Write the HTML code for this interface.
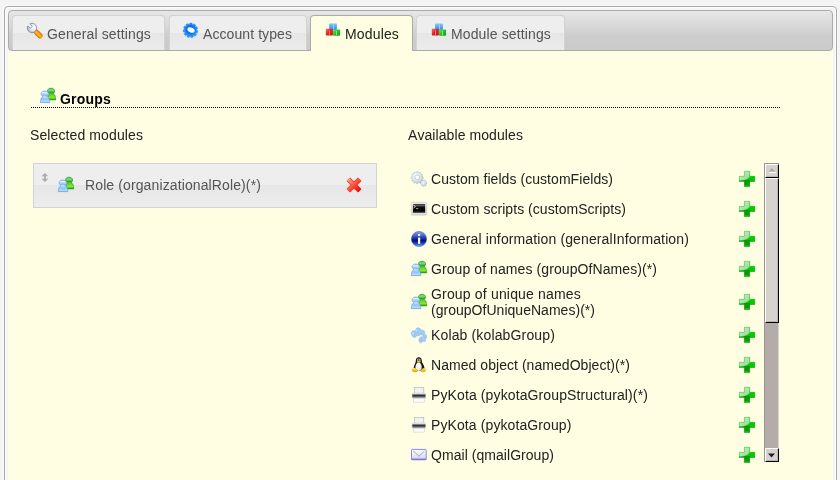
<!DOCTYPE html>
<html><head><meta charset="utf-8"><style>
html,body{margin:0;padding:0;}
body{width:840px;height:480px;overflow:hidden;background:#f4f4f4;font-family:"Liberation Sans",sans-serif;font-size:14px;position:relative;}
.a{position:absolute;}
.t{position:absolute;line-height:16px;white-space:nowrap;color:#222;will-change:transform;font-kerning:none;font-variant-ligatures:none;}
#outer{left:4px;top:6px;width:833px;height:600px;box-sizing:border-box;border:1px solid #aaa;border-radius:4px;background:#f5f5f8;box-shadow:0 0 0 1px #f8f8f8,inset 0 0 0 1px #fbfbfb;}
#panel{left:8px;top:51px;width:825px;height:560px;background:#fffde2;}
#nav{left:8px;top:10px;width:825px;height:41px;box-sizing:border-box;border:1px solid #aaa;border-radius:4px;background:linear-gradient(#e7e7e7 0%,#cdcdcd 65%,#cbcbcb 100%);}
.tab{position:absolute;top:15px;height:35px;box-sizing:border-box;border:1px solid #d3d3d3;border-bottom:0;border-radius:4px 4px 0 0;background:linear-gradient(#eeeeee 0,#eeeeee 50%,#e6e6e6 50%,#ececec 100%);}
.tab.act{border-color:#aaa;background:#fffde2;height:36px;}
#dots{left:31px;top:107px;width:749px;height:1px;background:repeating-linear-gradient(90deg,#000 0,#000 1px,transparent 1px,transparent 2px);}
#selbox{left:33px;top:163px;width:344px;height:45px;box-sizing:border-box;border:1px solid #d3d3d3;background:linear-gradient(#eeeeee 0,#eeeeee 50%,#e6e6e6 50%,#ededed 100%);}
#sb{left:764px;top:163px;width:15px;height:299px;box-sizing:border-box;background:#b4aca8;border-left:1px solid #9a9490;border-top:1px solid #9a9490;box-shadow:inset -1px 0 0 #d8d4d0;}
.sbb{position:absolute;box-sizing:border-box;left:0;width:14px;background:#d6d2ce;border-top:1px solid #fff;border-left:1px solid #fff;border-right:1px solid #000;border-bottom:1px solid #000;box-shadow:inset -1px -1px 0 #bcb6b2;}
</style></head><body>
<div id="outer" class="a"></div><div id="panel" class="a"></div><div id="nav" class="a"></div>
<div class="tab" style="left:12px;width:153px"></div>
<div class="tab" style="left:169px;width:138px"></div>
<div class="tab act" style="left:310px;width:103px"></div>
<div class="tab" style="left:416px;width:149px"></div>
<svg class="a" style="left:27px;top:22px;overflow:visible" width="16" height="16" viewBox="0 0 16 16"><defs><linearGradient id="wo" x1="0" y1="0" x2="1" y2="0"><stop offset="0" stop-color="#e07800"/><stop offset="0.45" stop-color="#ffc020"/><stop offset="1" stop-color="#f07000"/></linearGradient>
<radialGradient id="ws" cx="0.65" cy="0.4" r="0.75"><stop offset="0" stop-color="#ffffff"/><stop offset="0.5" stop-color="#e4e6ee"/><stop offset="1" stop-color="#9ca2b8"/></radialGradient></defs>
<g transform="rotate(-45 11.2 12)"><rect x="8.8" y="7" width="4.8" height="9.8" rx="2.4" fill="url(#wo)" stroke="#c86000" stroke-width="0.6"/></g>
<path d="M0.79,3.91 L3.23,6.35 L5.35,4.23 L2.91,1.79 A4.7,4.7 0 1 1 0.79,3.91 Z" fill="url(#ws)" stroke="#7c84a0" stroke-width="0.8" stroke-linejoin="round"/></svg>
<span class="t" style="left:47px;top:26px;letter-spacing:0.128px;color:#555">General settings</span>
<svg class="a" style="left:184px;top:22px;overflow:visible" width="16" height="16" viewBox="0 0 16 16"><defs><radialGradient id="gr" cx="0.5" cy="0.45" r="0.6"><stop offset="0.45" stop-color="#1070e8"/><stop offset="0.75" stop-color="#2a9aff"/><stop offset="1" stop-color="#1a8af8"/></radialGradient>
<radialGradient id="gh" cx="0.4" cy="0.45" r="0.6"><stop offset="0" stop-color="#ffffff"/><stop offset="0.7" stop-color="#f4faff"/><stop offset="1" stop-color="#9ad4ff"/></radialGradient></defs>
<g transform="translate(6.5 8.3)"><path d="M5.99,-0.34 L7.39,0.40 L6.96,2.51 L5.38,2.65 L5.22,2.95 L6.00,4.33 L4.50,5.87 L3.10,5.14 L2.80,5.31 L2.70,6.89 L0.61,7.37 L-0.17,6.00 L-0.51,5.98 L-1.45,7.26 L-3.47,6.53 L-3.39,4.95 L-3.66,4.75 L-5.14,5.32 L-6.45,3.62 L-5.53,2.34 L-5.65,2.02 L-7.20,1.70 L-7.39,-0.44 L-5.91,-1.02 L-5.84,-1.36 L-6.98,-2.47 L-5.97,-4.37 L-4.42,-4.06 L-4.18,-4.30 L-4.54,-5.85 L-2.66,-6.90 L-1.52,-5.80 L-1.19,-5.88 L-0.65,-7.37 L1.49,-7.25 L1.85,-5.71 L2.18,-5.59 L3.44,-6.55 L5.17,-5.29 L4.65,-3.80 L4.85,-3.53 L6.43,-3.66 L7.21,-1.65 L5.96,-0.68 Z" fill="url(#gr)" stroke="#1a88f8" stroke-width="0.4" stroke-linejoin="round"/>
<ellipse cx="0.5" cy="-0.4" rx="3.9" ry="2.5" transform="rotate(24)" fill="url(#gh)"/></g></svg>
<span class="t" style="left:203px;top:26px;letter-spacing:0.082px;color:#555">Account types</span>
<svg class="a" style="left:325px;top:22px;overflow:visible" width="16" height="16" viewBox="0 0 16 16"><defs><linearGradient id="cb" x1="0" y1="0" x2="0" y2="1"><stop offset="0" stop-color="#a8d8ff"/><stop offset="0.25" stop-color="#6ab8f8"/><stop offset="1" stop-color="#2a90f0"/></linearGradient>
<linearGradient id="cr" x1="0" y1="0" x2="1" y2="1"><stop offset="0" stop-color="#f07070"/><stop offset="0.5" stop-color="#e02020"/><stop offset="1" stop-color="#d00808"/></linearGradient>
<linearGradient id="cg" x1="0" y1="0" x2="1" y2="1"><stop offset="0" stop-color="#70dd70"/><stop offset="0.5" stop-color="#28c028"/><stop offset="1" stop-color="#10a010"/></linearGradient></defs>
<rect x="4.1" y="1.3" width="7.8" height="6.6" rx="0.8" fill="url(#cb)"/><rect x="8.2" y="2.8" width="0.7" height="4.5" fill="#e8f6ff" opacity="0.8"/>
<rect x="0.8" y="6.8" width="7.1" height="6.7" rx="0.8" fill="url(#cr)"/><rect x="4.2" y="8.6" width="0.7" height="4.3" fill="#ffd8d8" opacity="0.8"/>
<rect x="7.9" y="7.5" width="7.2" height="6.2" rx="0.8" fill="url(#cg)"/><rect x="11.2" y="9" width="0.7" height="4.2" fill="#d8ffd8" opacity="0.8"/></svg>
<span class="t" style="left:345px;top:26px;letter-spacing:0.155px;color:#212121">Modules</span>
<svg class="a" style="left:431px;top:22px;overflow:visible" width="16" height="16" viewBox="0 0 16 16"><defs><linearGradient id="cb" x1="0" y1="0" x2="0" y2="1"><stop offset="0" stop-color="#a8d8ff"/><stop offset="0.25" stop-color="#6ab8f8"/><stop offset="1" stop-color="#2a90f0"/></linearGradient>
<linearGradient id="cr" x1="0" y1="0" x2="1" y2="1"><stop offset="0" stop-color="#f07070"/><stop offset="0.5" stop-color="#e02020"/><stop offset="1" stop-color="#d00808"/></linearGradient>
<linearGradient id="cg" x1="0" y1="0" x2="1" y2="1"><stop offset="0" stop-color="#70dd70"/><stop offset="0.5" stop-color="#28c028"/><stop offset="1" stop-color="#10a010"/></linearGradient></defs>
<rect x="4.1" y="1.3" width="7.8" height="6.6" rx="0.8" fill="url(#cb)"/><rect x="8.2" y="2.8" width="0.7" height="4.5" fill="#e8f6ff" opacity="0.8"/>
<rect x="0.8" y="6.8" width="7.1" height="6.7" rx="0.8" fill="url(#cr)"/><rect x="4.2" y="8.6" width="0.7" height="4.3" fill="#ffd8d8" opacity="0.8"/>
<rect x="7.9" y="7.5" width="7.2" height="6.2" rx="0.8" fill="url(#cg)"/><rect x="11.2" y="9" width="0.7" height="4.2" fill="#d8ffd8" opacity="0.8"/></svg>
<span class="t" style="left:451px;top:26px;letter-spacing:0.130px;color:#555">Module settings</span>
<svg class="a" style="left:40px;top:88px;overflow:visible" width="16" height="16" viewBox="0 0 16 16"><defs><linearGradient id="gb" x1="0" y1="0" x2="0" y2="1"><stop offset="0" stop-color="#94c4f4"/><stop offset="0.12" stop-color="#dcefff"/><stop offset="0.38" stop-color="#88bef2"/><stop offset="0.5" stop-color="#c4e2ff"/><stop offset="0.68" stop-color="#8cc2f4"/><stop offset="0.9" stop-color="#b4daff"/><stop offset="1" stop-color="#70a8e8"/></linearGradient>
<linearGradient id="gg" x1="0" y1="0" x2="0" y2="1"><stop offset="0" stop-color="#2aa82a"/><stop offset="0.15" stop-color="#98dc88"/><stop offset="0.38" stop-color="#22a822"/><stop offset="0.5" stop-color="#60c840"/><stop offset="0.8" stop-color="#88ea20"/><stop offset="1" stop-color="#2a9a1a"/></linearGradient></defs>
<path d="M11,0.2 C13.2,0.2 14.6,1.4 14.6,3 C14.6,4.4 13.7,5.2 13.2,5.8 C15,6.5 15.6,8.4 15.7,11.9 L7.6,11.9 C7.7,8.4 8.4,6.5 9.8,5.8 C9,5.2 7.4,4.4 7.4,3 C7.4,1.4 8.8,0.2 11,0.2 Z" fill="url(#gg)" stroke="#1c941c" stroke-width="0.6"/>
<path d="M4.8,3 C7,3 8.5,4.2 8.5,5.8 C8.5,7.2 7.5,8 6.9,8.6 C8.8,9.3 9.8,11 9.9,14.6 L0.3,14.6 C0.4,11 1.4,9.3 3,8.6 C2.1,8 1.1,7.2 1.1,5.8 C1.1,4.2 2.6,3 4.8,3 Z" fill="url(#gb)" stroke="#5c9ae0" stroke-width="0.6"/></svg>
<span class="t" style="left:60px;top:91px;letter-spacing:0.203px;font-weight:bold;color:#000">Groups</span>
<div id="dots" class="a"></div>
<span class="t" style="left:30px;top:127px;letter-spacing:0.107px;">Selected modules</span>
<span class="t" style="left:408px;top:127px;letter-spacing:0.081px;">Available modules</span>
<div id="selbox" class="a"></div>
<svg class="a" style="left:41px;top:173px;overflow:visible" width="8" height="9" viewBox="0 0 8 9"><path d="M3.9,0 L7.3,3.3 L4.85,3.3 L4.85,5.7 L7.3,5.7 L3.9,9 L0.5,5.7 L2.95,5.7 L2.95,3.3 L0.5,3.3 Z" fill="#ababab"/></svg>
<svg class="a" style="left:58px;top:177px;overflow:visible" width="16" height="16" viewBox="0 0 16 16"><defs><linearGradient id="gb" x1="0" y1="0" x2="0" y2="1"><stop offset="0" stop-color="#94c4f4"/><stop offset="0.12" stop-color="#dcefff"/><stop offset="0.38" stop-color="#88bef2"/><stop offset="0.5" stop-color="#c4e2ff"/><stop offset="0.68" stop-color="#8cc2f4"/><stop offset="0.9" stop-color="#b4daff"/><stop offset="1" stop-color="#70a8e8"/></linearGradient>
<linearGradient id="gg" x1="0" y1="0" x2="0" y2="1"><stop offset="0" stop-color="#2aa82a"/><stop offset="0.15" stop-color="#98dc88"/><stop offset="0.38" stop-color="#22a822"/><stop offset="0.5" stop-color="#60c840"/><stop offset="0.8" stop-color="#88ea20"/><stop offset="1" stop-color="#2a9a1a"/></linearGradient></defs>
<path d="M11,0.2 C13.2,0.2 14.6,1.4 14.6,3 C14.6,4.4 13.7,5.2 13.2,5.8 C15,6.5 15.6,8.4 15.7,11.9 L7.6,11.9 C7.7,8.4 8.4,6.5 9.8,5.8 C9,5.2 7.4,4.4 7.4,3 C7.4,1.4 8.8,0.2 11,0.2 Z" fill="url(#gg)" stroke="#1c941c" stroke-width="0.6"/>
<path d="M4.8,3 C7,3 8.5,4.2 8.5,5.8 C8.5,7.2 7.5,8 6.9,8.6 C8.8,9.3 9.8,11 9.9,14.6 L0.3,14.6 C0.4,11 1.4,9.3 3,8.6 C2.1,8 1.1,7.2 1.1,5.8 C1.1,4.2 2.6,3 4.8,3 Z" fill="url(#gb)" stroke="#5c9ae0" stroke-width="0.6"/></svg>
<span class="t" style="left:85px;top:177px;letter-spacing:0.116px;color:#555">Role (organizationalRole)(*)</span>
<svg class="a" style="left:346px;top:177px;overflow:visible" width="16" height="16" viewBox="0 0 16 16"><defs><linearGradient id="xr" gradientUnits="userSpaceOnUse" x1="2" y1="2" x2="14" y2="14"><stop offset="0" stop-color="#ff9a88"/><stop offset="0.45" stop-color="#ff5a40"/><stop offset="1" stop-color="#f00000"/></linearGradient></defs>
<g stroke-linecap="butt"><line x1="2.3" y1="2.3" x2="13.7" y2="13.7" stroke="#e03020" stroke-width="5"/><line x1="13.7" y1="2.3" x2="2.3" y2="13.7" stroke="#e03020" stroke-width="5"/>
<line x1="2.3" y1="2.3" x2="13.7" y2="13.7" stroke="url(#xr)" stroke-width="3.8"/><line x1="13.7" y1="2.3" x2="2.3" y2="13.7" stroke="url(#xr)" stroke-width="3.8"/></g></svg>
<svg class="a" style="left:411px;top:171px;overflow:visible" width="16" height="16" viewBox="0 0 16 16"><defs><radialGradient id="cfg" cx="0.4" cy="0.35" r="0.7"><stop offset="0" stop-color="#ffffff"/><stop offset="0.6" stop-color="#dde6ee"/><stop offset="1" stop-color="#a8bacc"/></radialGradient></defs>
<path d="M15.10,11.39 L15.86,11.58 L15.86,12.62 L15.10,12.81 L14.87,13.37 L15.27,14.04 L14.54,14.77 L13.87,14.37 L13.31,14.60 L13.12,15.36 L12.08,15.36 L11.89,14.60 L11.33,14.37 L10.66,14.77 L9.93,14.04 L10.33,13.37 L10.10,12.81 L9.34,12.62 L9.34,11.58 L10.10,11.39 L10.33,10.83 L9.93,10.16 L10.66,9.43 L11.33,9.83 L11.89,9.60 L12.08,8.84 L13.12,8.84 L13.31,9.60 L13.87,9.83 L14.54,9.43 L15.27,10.16 L14.87,10.83 Z" fill="url(#cfg)" stroke="#9fb4c8" stroke-width="0.5"/><circle cx="12.6" cy="12.1" r="1.2" fill="#fffde2" stroke="#b0c0d0" stroke-width="0.4"/>
<path d="M11.02,5.71 L12.17,5.97 L12.17,7.23 L11.02,7.49 L10.82,8.24 L11.68,9.04 L11.05,10.13 L9.93,9.78 L9.38,10.33 L9.73,11.45 L8.64,12.08 L7.84,11.22 L7.09,11.42 L6.83,12.57 L5.57,12.57 L5.31,11.42 L4.56,11.22 L3.76,12.08 L2.67,11.45 L3.02,10.33 L2.47,9.78 L1.35,10.13 L0.72,9.04 L1.58,8.24 L1.38,7.49 L0.23,7.23 L0.23,5.97 L1.38,5.71 L1.58,4.96 L0.72,4.16 L1.35,3.07 L2.47,3.42 L3.02,2.87 L2.67,1.75 L3.76,1.12 L4.56,1.98 L5.31,1.78 L5.57,0.63 L6.83,0.63 L7.09,1.78 L7.84,1.98 L8.64,1.12 L9.73,1.75 L9.38,2.87 L9.93,3.42 L11.05,3.07 L11.68,4.16 L10.82,4.96 Z" fill="url(#cfg)" stroke="#9fb4c8" stroke-width="0.5"/><circle cx="6.3" cy="6.3" r="2.4" fill="#fdfdf4" stroke="#a8bccc" stroke-width="0.7"/></svg>
<span class="t" style="left:431px;top:171px;letter-spacing:0.054px;">Custom fields (customFields)</span>
<svg class="a" style="left:739px;top:171px;overflow:visible" width="16" height="16" viewBox="0 0 16 16"><defs><clipPath id="pc"><path d="M5.3,0.2 H10.8 V5.2 H15.8 V10.5 H10.8 V15.7 H5.3 V10.5 H0.2 V5.2 H5.3 Z"/></clipPath>
<linearGradient id="pl" x1="0" y1="0" x2="1" y2="1"><stop offset="0" stop-color="#d8f4d4"/><stop offset="1" stop-color="#88d488"/></linearGradient>
<linearGradient id="pd" x1="0" y1="0" x2="0" y2="1"><stop offset="0" stop-color="#089a08"/><stop offset="0.7" stop-color="#109810"/><stop offset="1" stop-color="#50c050"/></linearGradient></defs>
<g clip-path="url(#pc)"><rect x="0" y="0" width="16" height="16" fill="#00c800"/>
<path d="M0,9 H16 V16 H0 Z" fill="url(#pd)"/><path d="M10.8,5.2 H16 V10.5 H10.8 C12,8.5 11.5,7 10.8,6.5 Z" fill="#00cc00"/>
<path d="M0,0 H10.8 V5.4 C9.5,7.6 6.5,9.3 0,9.6 Z" fill="url(#pl)"/></g>
<path d="M5.3,0.2 H10.8 V5.2 H15.8 V10.5 H10.8 V15.7 H5.3 V10.5 H0.2 V5.2 H5.3 Z" fill="none" stroke="#30b030" stroke-width="0.5" opacity="0.6"/></svg>
<svg class="a" style="left:411px;top:201px;overflow:visible" width="16" height="16" viewBox="0 0 16 16"><defs><linearGradient id="tf" x1="0" y1="0" x2="0" y2="1"><stop offset="0" stop-color="#ffffff"/><stop offset="1" stop-color="#dcdcdc"/></linearGradient>
<linearGradient id="ts" x1="0" y1="0" x2="0" y2="1"><stop offset="0" stop-color="#202020"/><stop offset="0.15" stop-color="#6a6a6a"/><stop offset="0.35" stop-color="#101010"/><stop offset="0.75" stop-color="#000"/><stop offset="1" stop-color="#4a4a4a"/></linearGradient></defs>
<rect x="0.3" y="1.3" width="15.4" height="12.8" rx="1.5" fill="url(#tf)" stroke="#b8b8b8" stroke-width="0.6"/>
<rect x="1.9" y="2.9" width="12.3" height="9" fill="url(#ts)"/>
<path d="M2.6,4 L4.4,5.5 L2.6,7" fill="none" stroke="#e0e0e0" stroke-width="0.9"/><rect x="5" y="7.2" width="2.2" height="0.9" fill="#ababab"/></svg>
<span class="t" style="left:431px;top:201px;letter-spacing:0.043px;">Custom scripts (customScripts)</span>
<svg class="a" style="left:739px;top:201px;overflow:visible" width="16" height="16" viewBox="0 0 16 16"><defs><clipPath id="pc"><path d="M5.3,0.2 H10.8 V5.2 H15.8 V10.5 H10.8 V15.7 H5.3 V10.5 H0.2 V5.2 H5.3 Z"/></clipPath>
<linearGradient id="pl" x1="0" y1="0" x2="1" y2="1"><stop offset="0" stop-color="#d8f4d4"/><stop offset="1" stop-color="#88d488"/></linearGradient>
<linearGradient id="pd" x1="0" y1="0" x2="0" y2="1"><stop offset="0" stop-color="#089a08"/><stop offset="0.7" stop-color="#109810"/><stop offset="1" stop-color="#50c050"/></linearGradient></defs>
<g clip-path="url(#pc)"><rect x="0" y="0" width="16" height="16" fill="#00c800"/>
<path d="M0,9 H16 V16 H0 Z" fill="url(#pd)"/><path d="M10.8,5.2 H16 V10.5 H10.8 C12,8.5 11.5,7 10.8,6.5 Z" fill="#00cc00"/>
<path d="M0,0 H10.8 V5.4 C9.5,7.6 6.5,9.3 0,9.6 Z" fill="url(#pl)"/></g>
<path d="M5.3,0.2 H10.8 V5.2 H15.8 V10.5 H10.8 V15.7 H5.3 V10.5 H0.2 V5.2 H5.3 Z" fill="none" stroke="#30b030" stroke-width="0.5" opacity="0.6"/></svg>
<svg class="a" style="left:411px;top:231px;overflow:visible" width="16" height="16" viewBox="0 0 16 16"><defs><linearGradient id="ig" x1="0" y1="0" x2="0" y2="1"><stop offset="0" stop-color="#8aa8ea"/><stop offset="0.25" stop-color="#4a6ad8"/><stop offset="0.5" stop-color="#102a9a"/><stop offset="0.62" stop-color="#001070"/><stop offset="0.85" stop-color="#3060d8"/><stop offset="1" stop-color="#80c8ff"/></linearGradient></defs>
<circle cx="8" cy="8" r="7.6" fill="url(#ig)" stroke="#3050b8" stroke-width="0.5"/>
<rect x="7" y="3.1" width="2.2" height="1.9" rx="0.6" fill="#fff"/><rect x="7" y="6.6" width="2.2" height="6.3" fill="#fff"/></svg>
<span class="t" style="left:431px;top:231px;letter-spacing:0.127px;">General information (generalInformation)</span>
<svg class="a" style="left:739px;top:231px;overflow:visible" width="16" height="16" viewBox="0 0 16 16"><defs><clipPath id="pc"><path d="M5.3,0.2 H10.8 V5.2 H15.8 V10.5 H10.8 V15.7 H5.3 V10.5 H0.2 V5.2 H5.3 Z"/></clipPath>
<linearGradient id="pl" x1="0" y1="0" x2="1" y2="1"><stop offset="0" stop-color="#d8f4d4"/><stop offset="1" stop-color="#88d488"/></linearGradient>
<linearGradient id="pd" x1="0" y1="0" x2="0" y2="1"><stop offset="0" stop-color="#089a08"/><stop offset="0.7" stop-color="#109810"/><stop offset="1" stop-color="#50c050"/></linearGradient></defs>
<g clip-path="url(#pc)"><rect x="0" y="0" width="16" height="16" fill="#00c800"/>
<path d="M0,9 H16 V16 H0 Z" fill="url(#pd)"/><path d="M10.8,5.2 H16 V10.5 H10.8 C12,8.5 11.5,7 10.8,6.5 Z" fill="#00cc00"/>
<path d="M0,0 H10.8 V5.4 C9.5,7.6 6.5,9.3 0,9.6 Z" fill="url(#pl)"/></g>
<path d="M5.3,0.2 H10.8 V5.2 H15.8 V10.5 H10.8 V15.7 H5.3 V10.5 H0.2 V5.2 H5.3 Z" fill="none" stroke="#30b030" stroke-width="0.5" opacity="0.6"/></svg>
<svg class="a" style="left:411px;top:261px;overflow:visible" width="16" height="16" viewBox="0 0 16 16"><defs><linearGradient id="gb" x1="0" y1="0" x2="0" y2="1"><stop offset="0" stop-color="#94c4f4"/><stop offset="0.12" stop-color="#dcefff"/><stop offset="0.38" stop-color="#88bef2"/><stop offset="0.5" stop-color="#c4e2ff"/><stop offset="0.68" stop-color="#8cc2f4"/><stop offset="0.9" stop-color="#b4daff"/><stop offset="1" stop-color="#70a8e8"/></linearGradient>
<linearGradient id="gg" x1="0" y1="0" x2="0" y2="1"><stop offset="0" stop-color="#2aa82a"/><stop offset="0.15" stop-color="#98dc88"/><stop offset="0.38" stop-color="#22a822"/><stop offset="0.5" stop-color="#60c840"/><stop offset="0.8" stop-color="#88ea20"/><stop offset="1" stop-color="#2a9a1a"/></linearGradient></defs>
<path d="M11,0.2 C13.2,0.2 14.6,1.4 14.6,3 C14.6,4.4 13.7,5.2 13.2,5.8 C15,6.5 15.6,8.4 15.7,11.9 L7.6,11.9 C7.7,8.4 8.4,6.5 9.8,5.8 C9,5.2 7.4,4.4 7.4,3 C7.4,1.4 8.8,0.2 11,0.2 Z" fill="url(#gg)" stroke="#1c941c" stroke-width="0.6"/>
<path d="M4.8,3 C7,3 8.5,4.2 8.5,5.8 C8.5,7.2 7.5,8 6.9,8.6 C8.8,9.3 9.8,11 9.9,14.6 L0.3,14.6 C0.4,11 1.4,9.3 3,8.6 C2.1,8 1.1,7.2 1.1,5.8 C1.1,4.2 2.6,3 4.8,3 Z" fill="url(#gb)" stroke="#5c9ae0" stroke-width="0.6"/></svg>
<span class="t" style="left:431px;top:261px;letter-spacing:0.084px;">Group of names (groupOfNames)(*)</span>
<svg class="a" style="left:739px;top:261px;overflow:visible" width="16" height="16" viewBox="0 0 16 16"><defs><clipPath id="pc"><path d="M5.3,0.2 H10.8 V5.2 H15.8 V10.5 H10.8 V15.7 H5.3 V10.5 H0.2 V5.2 H5.3 Z"/></clipPath>
<linearGradient id="pl" x1="0" y1="0" x2="1" y2="1"><stop offset="0" stop-color="#d8f4d4"/><stop offset="1" stop-color="#88d488"/></linearGradient>
<linearGradient id="pd" x1="0" y1="0" x2="0" y2="1"><stop offset="0" stop-color="#089a08"/><stop offset="0.7" stop-color="#109810"/><stop offset="1" stop-color="#50c050"/></linearGradient></defs>
<g clip-path="url(#pc)"><rect x="0" y="0" width="16" height="16" fill="#00c800"/>
<path d="M0,9 H16 V16 H0 Z" fill="url(#pd)"/><path d="M10.8,5.2 H16 V10.5 H10.8 C12,8.5 11.5,7 10.8,6.5 Z" fill="#00cc00"/>
<path d="M0,0 H10.8 V5.4 C9.5,7.6 6.5,9.3 0,9.6 Z" fill="url(#pl)"/></g>
<path d="M5.3,0.2 H10.8 V5.2 H15.8 V10.5 H10.8 V15.7 H5.3 V10.5 H0.2 V5.2 H5.3 Z" fill="none" stroke="#30b030" stroke-width="0.5" opacity="0.6"/></svg>
<svg class="a" style="left:411px;top:294px;overflow:visible" width="16" height="16" viewBox="0 0 16 16"><defs><linearGradient id="gb" x1="0" y1="0" x2="0" y2="1"><stop offset="0" stop-color="#94c4f4"/><stop offset="0.12" stop-color="#dcefff"/><stop offset="0.38" stop-color="#88bef2"/><stop offset="0.5" stop-color="#c4e2ff"/><stop offset="0.68" stop-color="#8cc2f4"/><stop offset="0.9" stop-color="#b4daff"/><stop offset="1" stop-color="#70a8e8"/></linearGradient>
<linearGradient id="gg" x1="0" y1="0" x2="0" y2="1"><stop offset="0" stop-color="#2aa82a"/><stop offset="0.15" stop-color="#98dc88"/><stop offset="0.38" stop-color="#22a822"/><stop offset="0.5" stop-color="#60c840"/><stop offset="0.8" stop-color="#88ea20"/><stop offset="1" stop-color="#2a9a1a"/></linearGradient></defs>
<path d="M11,0.2 C13.2,0.2 14.6,1.4 14.6,3 C14.6,4.4 13.7,5.2 13.2,5.8 C15,6.5 15.6,8.4 15.7,11.9 L7.6,11.9 C7.7,8.4 8.4,6.5 9.8,5.8 C9,5.2 7.4,4.4 7.4,3 C7.4,1.4 8.8,0.2 11,0.2 Z" fill="url(#gg)" stroke="#1c941c" stroke-width="0.6"/>
<path d="M4.8,3 C7,3 8.5,4.2 8.5,5.8 C8.5,7.2 7.5,8 6.9,8.6 C8.8,9.3 9.8,11 9.9,14.6 L0.3,14.6 C0.4,11 1.4,9.3 3,8.6 C2.1,8 1.1,7.2 1.1,5.8 C1.1,4.2 2.6,3 4.8,3 Z" fill="url(#gb)" stroke="#5c9ae0" stroke-width="0.6"/></svg>
<span class="t" style="left:431px;top:286px;letter-spacing:0.175px;">Group of unique names</span>
<span class="t" style="left:431px;top:302px;letter-spacing:0.026px;">(groupOfUniqueNames)(*)</span>
<svg class="a" style="left:739px;top:294px;overflow:visible" width="16" height="16" viewBox="0 0 16 16"><defs><clipPath id="pc"><path d="M5.3,0.2 H10.8 V5.2 H15.8 V10.5 H10.8 V15.7 H5.3 V10.5 H0.2 V5.2 H5.3 Z"/></clipPath>
<linearGradient id="pl" x1="0" y1="0" x2="1" y2="1"><stop offset="0" stop-color="#d8f4d4"/><stop offset="1" stop-color="#88d488"/></linearGradient>
<linearGradient id="pd" x1="0" y1="0" x2="0" y2="1"><stop offset="0" stop-color="#089a08"/><stop offset="0.7" stop-color="#109810"/><stop offset="1" stop-color="#50c050"/></linearGradient></defs>
<g clip-path="url(#pc)"><rect x="0" y="0" width="16" height="16" fill="#00c800"/>
<path d="M0,9 H16 V16 H0 Z" fill="url(#pd)"/><path d="M10.8,5.2 H16 V10.5 H10.8 C12,8.5 11.5,7 10.8,6.5 Z" fill="#00cc00"/>
<path d="M0,0 H10.8 V5.4 C9.5,7.6 6.5,9.3 0,9.6 Z" fill="url(#pl)"/></g>
<path d="M5.3,0.2 H10.8 V5.2 H15.8 V10.5 H10.8 V15.7 H5.3 V10.5 H0.2 V5.2 H5.3 Z" fill="none" stroke="#30b030" stroke-width="0.5" opacity="0.6"/></svg>
<svg class="a" style="left:411px;top:327px;overflow:visible" width="16" height="16" viewBox="0 0 16 16"><g fill="#a2cdf4" stroke="#86bcee" stroke-width="0.45">
<ellipse cx="3.1" cy="7" rx="2.7" ry="3.5" transform="rotate(-20 3.1 7)"/><ellipse cx="11.5" cy="5.6" rx="2.3" ry="2.6"/><ellipse cx="7.1" cy="4.8" rx="3.1" ry="4" transform="rotate(8 7.1 4.8)"/>
<ellipse cx="13.7" cy="9.6" rx="2" ry="2.3"/><ellipse cx="13" cy="12.6" rx="1.8" ry="2.2"/><ellipse cx="9.9" cy="12.8" rx="1.9" ry="3" transform="rotate(10 9.9 12.8)"/></g>
<g fill="none" stroke="#7ab4ec" stroke-width="0.5" opacity="0.7"><path d="M7,1.5 C6.5,4 6.8,6.5 7.6,8.5"/><path d="M3,4.5 C2.6,6.5 3,8.5 4,10"/><path d="M10,10.8 C9.8,12.5 10,14 10.4,15.2"/></g>
<g fill="#cde6fb" opacity="0.8"><ellipse cx="5.4" cy="3.2" rx="1.2" ry="1"/><ellipse cx="2.2" cy="6.2" rx="0.9" ry="1.2"/><ellipse cx="12.6" cy="11.5" rx="0.8" ry="0.8"/></g></svg>
<span class="t" style="left:431px;top:327px;letter-spacing:0.144px;">Kolab (kolabGroup)</span>
<svg class="a" style="left:739px;top:327px;overflow:visible" width="16" height="16" viewBox="0 0 16 16"><defs><clipPath id="pc"><path d="M5.3,0.2 H10.8 V5.2 H15.8 V10.5 H10.8 V15.7 H5.3 V10.5 H0.2 V5.2 H5.3 Z"/></clipPath>
<linearGradient id="pl" x1="0" y1="0" x2="1" y2="1"><stop offset="0" stop-color="#d8f4d4"/><stop offset="1" stop-color="#88d488"/></linearGradient>
<linearGradient id="pd" x1="0" y1="0" x2="0" y2="1"><stop offset="0" stop-color="#089a08"/><stop offset="0.7" stop-color="#109810"/><stop offset="1" stop-color="#50c050"/></linearGradient></defs>
<g clip-path="url(#pc)"><rect x="0" y="0" width="16" height="16" fill="#00c800"/>
<path d="M0,9 H16 V16 H0 Z" fill="url(#pd)"/><path d="M10.8,5.2 H16 V10.5 H10.8 C12,8.5 11.5,7 10.8,6.5 Z" fill="#00cc00"/>
<path d="M0,0 H10.8 V5.4 C9.5,7.6 6.5,9.3 0,9.6 Z" fill="url(#pl)"/></g>
<path d="M5.3,0.2 H10.8 V5.2 H15.8 V10.5 H10.8 V15.7 H5.3 V10.5 H0.2 V5.2 H5.3 Z" fill="none" stroke="#30b030" stroke-width="0.5" opacity="0.6"/></svg>
<svg class="a" style="left:411px;top:357px;overflow:visible" width="16" height="16" viewBox="0 0 16 16"><defs><radialGradient id="tb" cx="0.4" cy="0.35" r="0.7"><stop offset="0" stop-color="#ffffff"/><stop offset="0.7" stop-color="#ececec"/><stop offset="1" stop-color="#b8b8b8"/></radialGradient>
<linearGradient id="tfoot" x1="0" y1="0" x2="0" y2="1"><stop offset="0" stop-color="#fff090"/><stop offset="0.4" stop-color="#f8d800"/><stop offset="1" stop-color="#e0a800"/></linearGradient></defs>
<path d="M7.8,0.2 C9.8,0.2 10.8,1.8 10.8,4 C10.8,6 12.8,7.6 13.3,10 C13.6,12 12.6,13.5 11.5,13.5 L4.5,13.5 C3.4,13.5 2.4,12.2 2.8,10.2 C3.2,7.8 4.8,6 4.8,4 C4.8,1.8 5.8,0.2 7.8,0.2 Z" fill="#151515"/>
<ellipse cx="7.5" cy="1.6" rx="1.8" ry="1" fill="#606060" opacity="0.7"/>
<path d="M7.6,5.4 C9.6,5.4 10.8,8 10.8,10.5 C10.8,12.8 9.5,14 7.6,14 C5.7,14 4.4,12.8 4.4,10.5 C4.4,8 5.6,5.4 7.6,5.4 Z" fill="url(#tb)"/>
<ellipse cx="6.8" cy="2.9" rx="0.8" ry="1" fill="#d0d0d0"/><ellipse cx="8.8" cy="2.9" rx="0.8" ry="1" fill="#d0d0d0"/><circle cx="7" cy="3.1" r="0.35" fill="#000"/><circle cx="8.6" cy="3.1" r="0.35" fill="#000"/>
<path d="M5.8,4.3 C6.6,3.7 9,3.7 9.8,4.3 C9.4,5.5 8.6,5.9 7.8,5.9 C7,5.9 6.2,5.5 5.8,4.3 Z" fill="#f4c000"/>
<path d="M1.2,12.6 C1.4,11.2 3,10.6 4.4,11.3 C5.6,12 6.8,13.3 6.6,14.3 C6.2,15.1 3,15.2 1.8,14.6 C1.2,14.2 1.1,13.3 1.2,12.6 Z" fill="url(#tfoot)" stroke="#c89400" stroke-width="0.3"/>
<path d="M14.6,12.4 C14.4,11.4 13,11 11.8,11.6 C10.6,12.3 9.8,13.4 10,14.2 C10.3,14.9 13,14.9 14,14.4 C14.6,14 14.7,13 14.6,12.4 Z" fill="url(#tfoot)" stroke="#c89400" stroke-width="0.3"/></svg>
<span class="t" style="left:431px;top:357px;letter-spacing:0.047px;">Named object (namedObject)(*)</span>
<svg class="a" style="left:739px;top:357px;overflow:visible" width="16" height="16" viewBox="0 0 16 16"><defs><clipPath id="pc"><path d="M5.3,0.2 H10.8 V5.2 H15.8 V10.5 H10.8 V15.7 H5.3 V10.5 H0.2 V5.2 H5.3 Z"/></clipPath>
<linearGradient id="pl" x1="0" y1="0" x2="1" y2="1"><stop offset="0" stop-color="#d8f4d4"/><stop offset="1" stop-color="#88d488"/></linearGradient>
<linearGradient id="pd" x1="0" y1="0" x2="0" y2="1"><stop offset="0" stop-color="#089a08"/><stop offset="0.7" stop-color="#109810"/><stop offset="1" stop-color="#50c050"/></linearGradient></defs>
<g clip-path="url(#pc)"><rect x="0" y="0" width="16" height="16" fill="#00c800"/>
<path d="M0,9 H16 V16 H0 Z" fill="url(#pd)"/><path d="M10.8,5.2 H16 V10.5 H10.8 C12,8.5 11.5,7 10.8,6.5 Z" fill="#00cc00"/>
<path d="M0,0 H10.8 V5.4 C9.5,7.6 6.5,9.3 0,9.6 Z" fill="url(#pl)"/></g>
<path d="M5.3,0.2 H10.8 V5.2 H15.8 V10.5 H10.8 V15.7 H5.3 V10.5 H0.2 V5.2 H5.3 Z" fill="none" stroke="#30b030" stroke-width="0.5" opacity="0.6"/></svg>
<svg class="a" style="left:411px;top:387px;overflow:visible" width="16" height="16" viewBox="0 0 16 16"><defs><linearGradient id="pb" x1="0" y1="0" x2="0" y2="1"><stop offset="0" stop-color="#f4f4f4"/><stop offset="0.22" stop-color="#d8d8d8"/><stop offset="0.3" stop-color="#606060"/><stop offset="0.5" stop-color="#282828"/><stop offset="0.8" stop-color="#8a8a8a"/><stop offset="1" stop-color="#e4e4e4"/></linearGradient></defs>
<rect x="3.4" y="0.5" width="9.4" height="6" fill="#f2f2f2" stroke="#b0b0b0" stroke-width="0.6"/>
<rect x="1.1" y="6" width="13.6" height="5.4" rx="1.2" fill="url(#pb)" stroke="#c8c8c8" stroke-width="0.5"/>
<rect x="2.7" y="11.3" width="11" height="3.8" fill="#fbfbfb" stroke="#c8c8c8" stroke-width="0.5"/></svg>
<span class="t" style="left:431px;top:387px;letter-spacing:0.115px;">PyKota (pykotaGroupStructural)(*)</span>
<svg class="a" style="left:739px;top:387px;overflow:visible" width="16" height="16" viewBox="0 0 16 16"><defs><clipPath id="pc"><path d="M5.3,0.2 H10.8 V5.2 H15.8 V10.5 H10.8 V15.7 H5.3 V10.5 H0.2 V5.2 H5.3 Z"/></clipPath>
<linearGradient id="pl" x1="0" y1="0" x2="1" y2="1"><stop offset="0" stop-color="#d8f4d4"/><stop offset="1" stop-color="#88d488"/></linearGradient>
<linearGradient id="pd" x1="0" y1="0" x2="0" y2="1"><stop offset="0" stop-color="#089a08"/><stop offset="0.7" stop-color="#109810"/><stop offset="1" stop-color="#50c050"/></linearGradient></defs>
<g clip-path="url(#pc)"><rect x="0" y="0" width="16" height="16" fill="#00c800"/>
<path d="M0,9 H16 V16 H0 Z" fill="url(#pd)"/><path d="M10.8,5.2 H16 V10.5 H10.8 C12,8.5 11.5,7 10.8,6.5 Z" fill="#00cc00"/>
<path d="M0,0 H10.8 V5.4 C9.5,7.6 6.5,9.3 0,9.6 Z" fill="url(#pl)"/></g>
<path d="M5.3,0.2 H10.8 V5.2 H15.8 V10.5 H10.8 V15.7 H5.3 V10.5 H0.2 V5.2 H5.3 Z" fill="none" stroke="#30b030" stroke-width="0.5" opacity="0.6"/></svg>
<svg class="a" style="left:411px;top:417px;overflow:visible" width="16" height="16" viewBox="0 0 16 16"><defs><linearGradient id="pb" x1="0" y1="0" x2="0" y2="1"><stop offset="0" stop-color="#f4f4f4"/><stop offset="0.22" stop-color="#d8d8d8"/><stop offset="0.3" stop-color="#606060"/><stop offset="0.5" stop-color="#282828"/><stop offset="0.8" stop-color="#8a8a8a"/><stop offset="1" stop-color="#e4e4e4"/></linearGradient></defs>
<rect x="3.4" y="0.5" width="9.4" height="6" fill="#f2f2f2" stroke="#b0b0b0" stroke-width="0.6"/>
<rect x="1.1" y="6" width="13.6" height="5.4" rx="1.2" fill="url(#pb)" stroke="#c8c8c8" stroke-width="0.5"/>
<rect x="2.7" y="11.3" width="11" height="3.8" fill="#fbfbfb" stroke="#c8c8c8" stroke-width="0.5"/></svg>
<span class="t" style="left:431px;top:417px;letter-spacing:0.100px;">PyKota (pykotaGroup)</span>
<svg class="a" style="left:739px;top:417px;overflow:visible" width="16" height="16" viewBox="0 0 16 16"><defs><clipPath id="pc"><path d="M5.3,0.2 H10.8 V5.2 H15.8 V10.5 H10.8 V15.7 H5.3 V10.5 H0.2 V5.2 H5.3 Z"/></clipPath>
<linearGradient id="pl" x1="0" y1="0" x2="1" y2="1"><stop offset="0" stop-color="#d8f4d4"/><stop offset="1" stop-color="#88d488"/></linearGradient>
<linearGradient id="pd" x1="0" y1="0" x2="0" y2="1"><stop offset="0" stop-color="#089a08"/><stop offset="0.7" stop-color="#109810"/><stop offset="1" stop-color="#50c050"/></linearGradient></defs>
<g clip-path="url(#pc)"><rect x="0" y="0" width="16" height="16" fill="#00c800"/>
<path d="M0,9 H16 V16 H0 Z" fill="url(#pd)"/><path d="M10.8,5.2 H16 V10.5 H10.8 C12,8.5 11.5,7 10.8,6.5 Z" fill="#00cc00"/>
<path d="M0,0 H10.8 V5.4 C9.5,7.6 6.5,9.3 0,9.6 Z" fill="url(#pl)"/></g>
<path d="M5.3,0.2 H10.8 V5.2 H15.8 V10.5 H10.8 V15.7 H5.3 V10.5 H0.2 V5.2 H5.3 Z" fill="none" stroke="#30b030" stroke-width="0.5" opacity="0.6"/></svg>
<svg class="a" style="left:411px;top:447px;overflow:visible" width="16" height="16" viewBox="0 0 16 16"><defs><linearGradient id="mg" x1="0" y1="0" x2="0" y2="1"><stop offset="0" stop-color="#ffffff"/><stop offset="1" stop-color="#d4d4f4"/></linearGradient></defs>
<rect x="0.5" y="2.4" width="14.7" height="10.4" rx="0.8" fill="url(#mg)" stroke="#8080d8" stroke-width="0.9"/>
<path d="M2.2,3.8 L8,9.3 L13.6,3.8" fill="none" stroke="#8c8cd0" stroke-width="0.8"/>
<rect x="0.6" y="11.6" width="14.6" height="1.2" fill="#7070c8"/></svg>
<span class="t" style="left:431px;top:447px;letter-spacing:0.048px;">Qmail (qmailGroup)</span>
<svg class="a" style="left:739px;top:447px;overflow:visible" width="16" height="16" viewBox="0 0 16 16"><defs><clipPath id="pc"><path d="M5.3,0.2 H10.8 V5.2 H15.8 V10.5 H10.8 V15.7 H5.3 V10.5 H0.2 V5.2 H5.3 Z"/></clipPath>
<linearGradient id="pl" x1="0" y1="0" x2="1" y2="1"><stop offset="0" stop-color="#d8f4d4"/><stop offset="1" stop-color="#88d488"/></linearGradient>
<linearGradient id="pd" x1="0" y1="0" x2="0" y2="1"><stop offset="0" stop-color="#089a08"/><stop offset="0.7" stop-color="#109810"/><stop offset="1" stop-color="#50c050"/></linearGradient></defs>
<g clip-path="url(#pc)"><rect x="0" y="0" width="16" height="16" fill="#00c800"/>
<path d="M0,9 H16 V16 H0 Z" fill="url(#pd)"/><path d="M10.8,5.2 H16 V10.5 H10.8 C12,8.5 11.5,7 10.8,6.5 Z" fill="#00cc00"/>
<path d="M0,0 H10.8 V5.4 C9.5,7.6 6.5,9.3 0,9.6 Z" fill="url(#pl)"/></g>
<path d="M5.3,0.2 H10.8 V5.2 H15.8 V10.5 H10.8 V15.7 H5.3 V10.5 H0.2 V5.2 H5.3 Z" fill="none" stroke="#30b030" stroke-width="0.5" opacity="0.6"/></svg>
<div id="sb" class="a">
<div class="sbb" style="top:0;height:14px;"><svg class="a" style="left:1px;top:2px" width="9" height="7" viewBox="0 0 9 7"><path d="M4.9,1 L8,4.4 L1.8,4.4 Z" fill="#aea8a4"/><rect x="2.2" y="5.1" width="6.6" height="1" fill="#fff"/></svg></div>
<div class="sbb" style="top:14px;height:145px;"></div>
<div class="sbb" style="top:284px;height:14px;"><svg class="a" style="left:0px;top:3px" width="10" height="7" viewBox="0 0 10 7"><path d="M2,1.5 L9,1.5 L5.5,5.4 Z" fill="#222"/></svg></div>
</div>
</body></html>
